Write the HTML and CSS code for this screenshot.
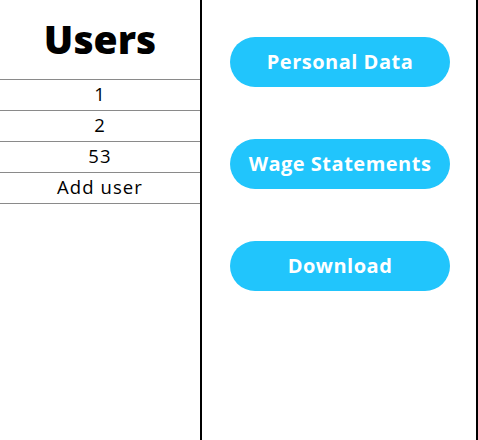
FILE: index.html
```html
<!DOCTYPE html>
<html lang="en">
<head>
<meta charset="utf-8">
<title>Users</title>
<link rel="stylesheet" href="styles.css">
</head>
<body>
<div class="app">
  <aside class="users">
    <h1 class="title">Users</h1>
    <ul class="user-list">
      <li class="user-row">1</li>
      <li class="user-row">2</li>
      <li class="user-row">53</li>
      <li class="user-row">Add user</li>
    </ul>
  </aside>
  <main class="actions">
    <button class="action">Personal Data</button>
    <button class="action">Wage Statements</button>
    <button class="action">Download</button>
  </main>
</div>
</body>
</html>
```
FILE: styles.css
```css
html, body {
  margin: 0;
  padding: 0;
  background: #fff;
}
body {
  font-family: "Open Sans", "DejaVu Sans", sans-serif;
  color: #000;
}
.app {
  display: flex;
  height: 440px;
  width: 478px;
}
.users {
  width: 200px;
  border-right: 2px solid #000;
  flex: none;
}
.title {
  margin: 0;
  height: 79px;
  box-sizing: border-box;
  padding-bottom: 3px;
  display: flex;
  align-items: center;
  justify-content: center;
  font-size: 39px;
  font-weight: 800;
  letter-spacing: 0;
}
.user-list {
  list-style: none;
  margin: 0;
  padding: 0;
}
.user-row {
  height: 31px;
  box-sizing: border-box;
  padding-bottom: 3px;
  border-top: 1px solid #8a8a8a;
  display: flex;
  align-items: center;
  justify-content: center;
  font-size: 18.5px;
  letter-spacing: 1.1px;
}
.user-row:last-child {
  height: 32px;
  border-bottom: 1px solid #8a8a8a;
}
.actions {
  flex: 1;
  border-right: 2px solid #000;
  display: flex;
  flex-direction: column;
  align-items: center;
  padding-top: 37px;
  padding-left: 2px;
  gap: 52px;
}
.action {
  width: 220px;
  height: 50px;
  border: none;
  border-radius: 25px;
  background: #21c5fc;
  color: #fff;
  font-family: "Open Sans", "DejaVu Sans", sans-serif;
  font-size: 20px;
  font-weight: 700;
  letter-spacing: 0.5px;
  padding: 0 0 2px;
  cursor: pointer;
}
```
